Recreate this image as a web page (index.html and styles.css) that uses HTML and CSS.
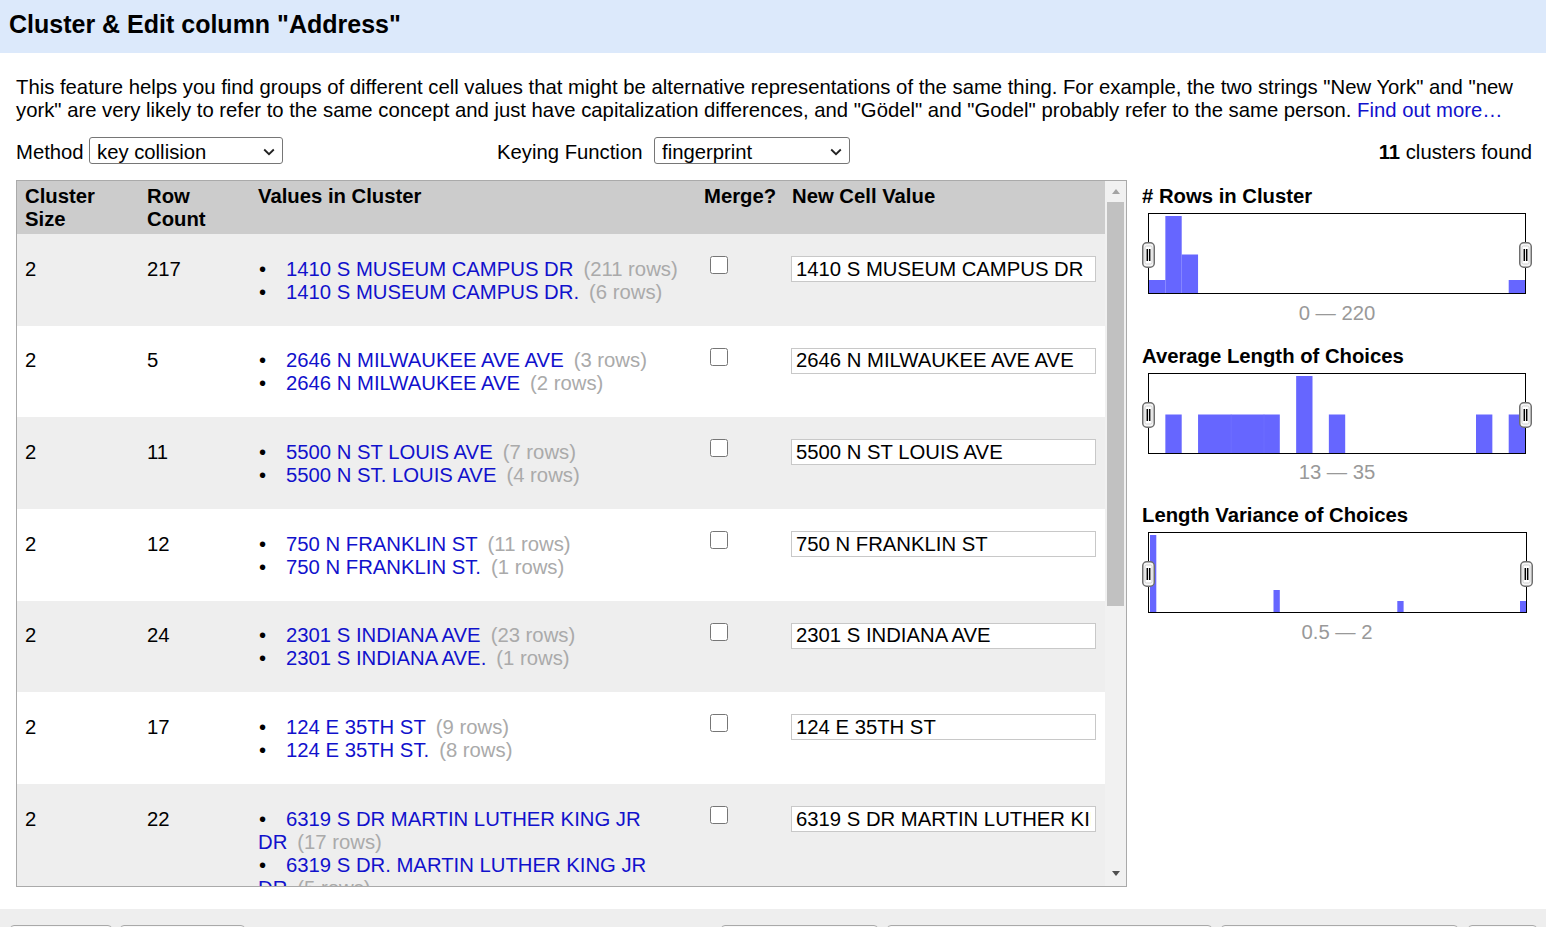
FILE: index.html
```html
<!DOCTYPE html>
<html>
<head>
<meta charset="utf-8">
<title>Cluster &amp; Edit</title>
<link rel="stylesheet" href="styles.css">
</head>
<body>
<div class="dialog">
  <header class="dlg-header">Cluster &amp; Edit column "Address"</header>
  <div class="dlg-body">
    <p class="intro">This feature helps you find groups of different cell values that might be alternative representations of the same thing. For example, the two strings "New York" and "new york" are very likely to refer to the same concept and just have capitalization differences, and "Gödel" and "Godel" probably refer to the same person. <a href="#">Find out more…</a></p>
    <div class="controls">
      <div class="ctl ctl-method">
        <label class="lbl lbl-method">Method</label>
        <span class="sel-wrap"><select class="sel sel-method"><option>key collision</option></select><svg class="chev" width="12" height="8" viewBox="0 0 12 8"><path d="M1.2 1.5L6 6.2l4.8-4.7" fill="none" stroke="#222" stroke-width="1.8"/></svg></span>
      </div>
      <div class="ctl">
        <label class="lbl lbl-key">Keying Function</label>
        <span class="sel-wrap"><select class="sel sel-key"><option>fingerprint</option></select><svg class="chev" width="12" height="8" viewBox="0 0 12 8"><path d="M1.2 1.5L6 6.2l4.8-4.7" fill="none" stroke="#222" stroke-width="1.8"/></svg></span>
      </div>
      <div class="found"><b>11</b> clusters found</div>
    </div>
    <div class="main">
      <div class="table-box">
        <div class="table-scroll">
          <table class="clusters">
            <colgroup><col class="c1"><col class="c2"><col class="c3"><col class="c4"><col class="c5"></colgroup>
            <thead>
              <tr><th>Cluster Size</th><th>Row Count</th><th>Values in Cluster</th><th class="nowrap">Merge?</th><th>New Cell Value</th></tr>
            </thead>
            <tbody>
              <tr>
                <td>2</td><td>217</td>
                <td><ul class="vals"><li><a href="#">1410 S MUSEUM CAMPUS DR</a><span class="cnt">(211 rows)</span></li><li><a href="#">1410 S MUSEUM CAMPUS DR.</a><span class="cnt">(6 rows)</span></li></ul></td>
                <td><input class="chk" type="checkbox"></td>
                <td><input class="newval" type="text" value="1410 S MUSEUM CAMPUS DR"></td>
              </tr>
              <tr>
                <td>2</td><td>5</td>
                <td><ul class="vals"><li><a href="#">2646 N MILWAUKEE AVE AVE</a><span class="cnt">(3 rows)</span></li><li><a href="#">2646 N MILWAUKEE AVE</a><span class="cnt">(2 rows)</span></li></ul></td>
                <td><input class="chk" type="checkbox"></td>
                <td><input class="newval" type="text" value="2646 N MILWAUKEE AVE AVE"></td>
              </tr>
              <tr>
                <td>2</td><td>11</td>
                <td><ul class="vals"><li><a href="#">5500 N ST LOUIS AVE</a><span class="cnt">(7 rows)</span></li><li><a href="#">5500 N ST. LOUIS AVE</a><span class="cnt">(4 rows)</span></li></ul></td>
                <td><input class="chk" type="checkbox"></td>
                <td><input class="newval" type="text" value="5500 N ST LOUIS AVE"></td>
              </tr>
              <tr>
                <td>2</td><td>12</td>
                <td><ul class="vals"><li><a href="#">750 N FRANKLIN ST</a><span class="cnt">(11 rows)</span></li><li><a href="#">750 N FRANKLIN ST.</a><span class="cnt">(1 rows)</span></li></ul></td>
                <td><input class="chk" type="checkbox"></td>
                <td><input class="newval" type="text" value="750 N FRANKLIN ST"></td>
              </tr>
              <tr>
                <td>2</td><td>24</td>
                <td><ul class="vals"><li><a href="#">2301 S INDIANA AVE</a><span class="cnt">(23 rows)</span></li><li><a href="#">2301 S INDIANA AVE.</a><span class="cnt">(1 rows)</span></li></ul></td>
                <td><input class="chk" type="checkbox"></td>
                <td><input class="newval" type="text" value="2301 S INDIANA AVE"></td>
              </tr>
              <tr>
                <td>2</td><td>17</td>
                <td><ul class="vals"><li><a href="#">124 E 35TH ST</a><span class="cnt">(9 rows)</span></li><li><a href="#">124 E 35TH ST.</a><span class="cnt">(8 rows)</span></li></ul></td>
                <td><input class="chk" type="checkbox"></td>
                <td><input class="newval" type="text" value="124 E 35TH ST"></td>
              </tr>
              <tr>
                <td>2</td><td>22</td>
                <td><ul class="vals"><li><a href="#">6319 S DR MARTIN LUTHER KING JR DR</a><span class="cnt">(17 rows)</span></li><li><a href="#">6319 S DR. MARTIN LUTHER KING JR DR</a><span class="cnt">(5 rows)</span></li></ul></td>
                <td><input class="chk" type="checkbox"></td>
                <td><input class="newval" type="text" value="6319 S DR MARTIN LUTHER KING JR DR"></td>
              </tr>
            </tbody>
          </table>
        </div>
        <div class="vscroll">
          <div class="sb-btn"><span class="tri tri-up"></span></div>
          <div class="thumb"></div>
          <div class="sb-fill"></div>
          <div class="sb-btn sb-btn-down"><span class="tri tri-down"></span></div>
        </div>
      </div>

      <aside class="facets">
        <section class="facet">
          <h3 class="facet-title"># Rows in Cluster</h3>
          <div class="hist">
            <svg class="hist-svg" width="376" height="79" viewBox="0 0 376 79">
              <rect x="0" y="66" width="16.35" height="13" fill="#6666ff"/>
              <rect x="16.35" y="2" width="16.35" height="77" fill="#6666ff"/>
              <rect x="32.7" y="40.5" width="16.35" height="38.5" fill="#6666ff"/>
              <rect x="359.7" y="66" width="16.3" height="13" fill="#6666ff"/>
            </svg>
            <svg class="handle handle-l" width="13" height="26" viewBox="0 0 13 26"><rect x="0.75" y="0.75" width="11.5" height="24.5" rx="4" fill="#f6f6f6" stroke="#6e6e6e" stroke-width="1.5"/><rect x="3" y="4" width="7" height="18" rx="1.5" fill="#fff" stroke="#d0d0d0"/><path d="M5.3 7v12M7.7 7v12" stroke="#000" stroke-width="1.5"/></svg>
            <svg class="handle handle-r" width="13" height="26" viewBox="0 0 13 26"><rect x="0.75" y="0.75" width="11.5" height="24.5" rx="4" fill="#f6f6f6" stroke="#6e6e6e" stroke-width="1.5"/><rect x="3" y="4" width="7" height="18" rx="1.5" fill="#fff" stroke="#d0d0d0"/><path d="M5.3 7v12M7.7 7v12" stroke="#000" stroke-width="1.5"/></svg>
          </div>
          <div class="hist-range">0 — 220</div>
        </section>
        <section class="facet">
          <h3 class="facet-title">Average Length of Choices</h3>
          <div class="hist">
            <svg class="hist-svg" width="376" height="79" viewBox="0 0 376 79">
              <rect x="16.35" y="40.5" width="16.35" height="38.5" fill="#6666ff"/>
              <rect x="49.05" y="40.5" width="81.75" height="38.5" fill="#6666ff"/>
              <path d="M82.2 40.5v38.5M115 40.5v38.5" stroke="#7272ff" stroke-width="0.6"/>
              <rect x="147.15" y="2" width="16.35" height="77" fill="#6666ff"/>
              <rect x="179.85" y="40.5" width="16.35" height="38.5" fill="#6666ff"/>
              <rect x="327" y="40.5" width="16.35" height="38.5" fill="#6666ff"/>
              <rect x="359.7" y="40.5" width="16.3" height="38.5" fill="#6666ff"/>
            </svg>
            <svg class="handle handle-l" width="13" height="26" viewBox="0 0 13 26"><rect x="0.75" y="0.75" width="11.5" height="24.5" rx="4" fill="#f6f6f6" stroke="#6e6e6e" stroke-width="1.5"/><rect x="3" y="4" width="7" height="18" rx="1.5" fill="#fff" stroke="#d0d0d0"/><path d="M5.3 7v12M7.7 7v12" stroke="#000" stroke-width="1.5"/></svg>
            <svg class="handle handle-r" width="13" height="26" viewBox="0 0 13 26"><rect x="0.75" y="0.75" width="11.5" height="24.5" rx="4" fill="#f6f6f6" stroke="#6e6e6e" stroke-width="1.5"/><rect x="3" y="4" width="7" height="18" rx="1.5" fill="#fff" stroke="#d0d0d0"/><path d="M5.3 7v12M7.7 7v12" stroke="#000" stroke-width="1.5"/></svg>
          </div>
          <div class="hist-range">13 — 35</div>
        </section>
        <section class="facet">
          <h3 class="facet-title">Length Variance of Choices</h3>
          <div class="hist hist-wide">
            <svg class="hist-svg" width="377" height="79" viewBox="0 0 377 79">
              <rect x="1" y="2" width="6.3" height="77" fill="#6666ff"/>
              <rect x="124.5" y="57" width="6.3" height="22" fill="#6666ff"/>
              <rect x="248.3" y="68" width="6.3" height="11" fill="#6666ff"/>
              <rect x="371" y="68" width="6" height="11" fill="#6666ff"/>
            </svg>
            <svg class="handle handle-l" width="13" height="26" viewBox="0 0 13 26"><rect x="0.75" y="0.75" width="11.5" height="24.5" rx="4" fill="#f6f6f6" stroke="#6e6e6e" stroke-width="1.5"/><rect x="3" y="4" width="7" height="18" rx="1.5" fill="#fff" stroke="#d0d0d0"/><path d="M5.3 7v12M7.7 7v12" stroke="#000" stroke-width="1.5"/></svg>
            <svg class="handle handle-r" width="13" height="26" viewBox="0 0 13 26"><rect x="0.75" y="0.75" width="11.5" height="24.5" rx="4" fill="#f6f6f6" stroke="#6e6e6e" stroke-width="1.5"/><rect x="3" y="4" width="7" height="18" rx="1.5" fill="#fff" stroke="#d0d0d0"/><path d="M5.3 7v12M7.7 7v12" stroke="#000" stroke-width="1.5"/></svg>
          </div>
          <div class="hist-range">0.5 — 2</div>
        </section>
      </aside>
    </div>
  </div>
  <footer class="dlg-footer">
    <div class="btn-group btn-group-left">
      <button class="btn btn-a" aria-label="Select all"></button>
      <button class="btn btn-b" aria-label="Deselect all"></button>
    </div>
    <div class="btn-group btn-group-right">
      <button class="btn btn-c" aria-label="Export clusters"></button>
      <button class="btn btn-d" aria-label="Merge selected and re-cluster"></button>
      <button class="btn btn-e" aria-label="Merge selected and close"></button>
      <button class="btn btn-f" aria-label="Close"></button>
    </div>
  </footer>
</div>
</body>
</html>
```

FILE: styles.css
```css
* { box-sizing: border-box; }

html, body {
  margin: 0;
  height: 100%;
  overflow: hidden;
  background: #fff;
}

body {
  font-family: "Liberation Sans", Arial, sans-serif;
  font-size: 20.3px;
  line-height: 23px;
  color: #000;
}

a { color: #11c; text-decoration: none; }

.dialog {
  height: 927px;
  display: flex;
  flex-direction: column;
  overflow: hidden;
}

.dlg-header {
  flex: none;
  height: 53px;
  background: #dce9fb;
  padding: 9.5px 0 0 9px;
  font-weight: bold;
  font-size: 25px;
  line-height: 29px;
}

.dlg-body {
  flex: none;
  padding: 0 14px 0 16px;
}

.intro { margin: 22.5px -10px 0 0; }

.controls {
  display: flex;
  align-items: center;
  height: 27px;
  margin-top: 15.5px;
}

.ctl { display: flex; align-items: center; }
.ctl-method { width: 481px; }

.lbl { padding-top: 3px; }
.lbl-method { width: 73px; }
.lbl-key { width: 157px; }

.sel-wrap { position: relative; display: block; }

.sel {
  display: block;
  height: 27px;
  margin: 0;
  padding: 2px 0 0 7px;
  font: 20.3px "Liberation Sans", Arial, sans-serif;
  color: #000;
  background: #fff;
  border: 1px solid #767676;
  border-radius: 3px;
  -webkit-appearance: none;
  appearance: none;
}
.sel-method { width: 194px; }
.sel-key { width: 196px; }

.chev {
  position: absolute;
  right: 8px;
  top: 11px;
  pointer-events: none;
}

.found { margin-left: auto; padding-top: 3px; }

.main {
  display: flex;
  margin-top: 16px;
  height: 707px;
}

.table-box {
  flex: none;
  display: flex;
  width: 1111px;
  height: 707px;
  border: 1px solid #aaa;
}

.table-scroll {
  flex: none;
  width: 1088px;
  overflow: hidden;
}

table.clusters {
  width: 1088px;
  table-layout: fixed;
  border-collapse: collapse;
}
col.c1 { width: 122px; }
col.c2 { width: 111px; }
col.c3 { width: 446px; }
col.c4 { width: 88px; }
col.c5 { width: 321px; }

.clusters th {
  background: #ccc;
  text-align: left;
  vertical-align: top;
  font-weight: bold;
  padding: 3.5px 8px;
}
.clusters th.nowrap { white-space: nowrap; }

.clusters td {
  vertical-align: top;
  padding: 23.5px 8px 22.2px;
}
.clusters tbody tr:nth-child(odd) { background: #eee; }
.clusters tbody tr:nth-child(even) { background: #fff; }

.vals { margin: 0; padding: 0; list-style: none; }
.vals li::before {
  content: "•";
  display: inline-block;
  width: 27px;
  padding-left: 1px;
}
.cnt { color: #aaa; margin-left: 10px; }

.chk {
  display: block;
  width: 18px;
  height: 18px;
  margin: -1.5px 0 0 6px;
}

.newval {
  display: block;
  width: 305px;
  height: 26px;
  margin: -1.5px 0 0 -1px;
  padding: 0 4px;
  font: 20.3px "Liberation Sans", Arial, sans-serif;
  color: #000;
  background: #fff;
  border: 1px solid #c8c8c8;
  border-radius: 0;
}

.vscroll {
  flex: none;
  width: 21px;
  background: #f1f1f1;
  display: flex;
  flex-direction: column;
  align-items: center;
}
.sb-btn {
  flex: none;
  height: 21px;
  width: 100%;
  display: flex;
  align-items: center;
  justify-content: center;
}
.sb-btn-down { height: 17px; margin-bottom: 4px; }
.tri { width: 0; height: 0; border-left: 4.5px solid transparent; border-right: 4.5px solid transparent; }
.tri-up { border-bottom: 5px solid #a3a3a3; }
.tri-down { border-top: 5px solid #505050; }
.thumb {
  flex: none;
  width: 17px;
  height: 404px;
  background: #c1c1c1;
}
.sb-fill { flex: 1; }

.facets {
  flex: none;
  width: 390px;
  margin-left: 15px;
  padding-top: 5px;
}

.facet { margin-bottom: 20px; }

.facet-title {
  margin: 0;
  font-size: 20.3px;
  line-height: 23px;
  font-weight: bold;
}

.hist {
  position: relative;
  width: 378px;
  height: 81px;
  margin: 5px 0 0 6px;
  border: 1px solid #000;
}
.hist-wide { width: 379px; }
.hist-svg { display: block; }

.handle { position: absolute; top: 28px; display: block; }
.handle-l { left: -7px; }
.handle-r { right: -7px; }

.hist-range {
  width: 378px;
  margin: 7.5px 0 0 6px;
  text-align: center;
  color: #999;
}

.dlg-footer {
  flex: 1;
  display: flex;
  margin-top: 22px;
  padding: 16px 9px 0 10px;
  background: #eee;
}
.btn-group { display: flex; gap: 8px; }
.btn-group-right { margin-left: auto; gap: 9px; }
.btn {
  height: 30px;
  padding: 0;
  background: #f8f8f8;
  border: 1px solid #a9a9a9;
  border-radius: 4px;
}
.btn-a { width: 102px; }
.btn-b { width: 125px; }
.btn-c { width: 157px; }
.btn-d { width: 325px; }
.btn-e { width: 237px; }
.btn-f { width: 69px; margin-left: 1px; }
```
